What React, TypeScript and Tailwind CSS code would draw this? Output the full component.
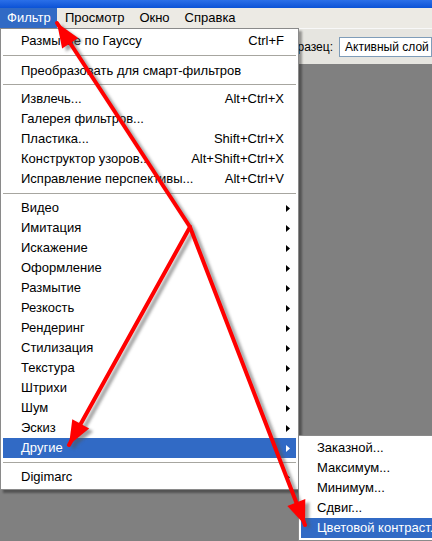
import React from 'react'

type Entry =
  | { kind: 'item'; label: string; shortcut?: string; sub?: boolean; active?: boolean }
  | { kind: 'sep'; h?: string }

const MENU: Entry[] = [
  { kind: 'item', label: 'Размытие по Гауссу', shortcut: 'Ctrl+F' },
  { kind: 'sep', h: 'h-[10px]' },
  { kind: 'item', label: 'Преобразовать для смарт-фильтров' },
  { kind: 'sep', h: 'h-[8px]' },
  { kind: 'item', label: 'Извлечь...', shortcut: 'Alt+Ctrl+X' },
  { kind: 'item', label: 'Галерея фильтров...' },
  { kind: 'item', label: 'Пластика...', shortcut: 'Shift+Ctrl+X' },
  { kind: 'item', label: 'Конструктор узоров...', shortcut: 'Alt+Shift+Ctrl+X' },
  { kind: 'item', label: 'Исправление перспективы...', shortcut: 'Alt+Ctrl+V' },
  { kind: 'sep', h: 'h-[9px]' },
  { kind: 'item', label: 'Видео', sub: true },
  { kind: 'item', label: 'Имитация', sub: true },
  { kind: 'item', label: 'Искажение', sub: true },
  { kind: 'item', label: 'Оформление', sub: true },
  { kind: 'item', label: 'Размытие', sub: true },
  { kind: 'item', label: 'Резкость', sub: true },
  { kind: 'item', label: 'Рендеринг', sub: true },
  { kind: 'item', label: 'Стилизация', sub: true },
  { kind: 'item', label: 'Текстура', sub: true },
  { kind: 'item', label: 'Штрихи', sub: true },
  { kind: 'item', label: 'Шум', sub: true },
  { kind: 'item', label: 'Эскиз', sub: true },
  { kind: 'item', label: 'Другие', sub: true, active: true },
  { kind: 'sep', h: 'h-[9px]' },
  { kind: 'item', label: 'Digimarc', sub: true },
]

const SUBMENU = ['Заказной...', 'Максимум...', 'Минимум...', 'Сдвиг...', 'Цветовой контраст...']

function Triangle({ white }: { white?: boolean }) {
  return (
    <svg width="4" height="7" viewBox="0 0 4 7" className="shrink-0">
      <path d="M0 0 L4 3.5 L0 7 Z" fill={white ? '#ffffff' : '#000000'} />
    </svg>
  )
}

function Arrows() {
  // red pointer lines drawn over the screenshot, with a soft grey drop shadow
  const lines = [
    { x1: 190, y1: 227, x2: 57, y2: 23 },
    { x1: 190, y1: 227, x2: 69, y2: 445 },
    { x1: 190, y1: 227, x2: 305, y2: 525 },
  ]
  const head = (x1: number, y1: number, x2: number, y2: number) => {
    const a = Math.atan2(y2 - y1, x2 - x1)
    const len = 26
    const w = 0.38
    const p1 = [x2 - len * Math.cos(a - w), y2 - len * Math.sin(a - w)]
    const p2 = [x2 - len * Math.cos(a + w), y2 - len * Math.sin(a + w)]
    return `${x2},${y2} ${p1[0]},${p1[1]} ${p2[0]},${p2[1]}`
  }
  return (
    <svg className="pointer-events-none absolute inset-0" width="432" height="541">
      <defs>
        <filter id="blur" x="-10%" y="-10%" width="120%" height="120%">
          <feGaussianBlur stdDeviation="1.6" />
        </filter>
      </defs>
      <g filter="url(#blur)" transform="translate(4 3)" opacity="0.55">
        {lines.map((l, i) => (
          <g key={i}>
            <line x1={l.x1} y1={l.y1} x2={l.x2} y2={l.y2} stroke="#555" strokeWidth="4" />
            <polygon points={head(l.x1, l.y1, l.x2, l.y2)} fill="#555" />
          </g>
        ))}
      </g>
      {lines.map((l, i) => (
        <g key={i}>
          <line x1={l.x1} y1={l.y1} x2={l.x2} y2={l.y2} stroke="#ff0000" strokeWidth="4" strokeLinecap="round" />
          <polygon points={head(l.x1, l.y1, l.x2, l.y2)} fill="#ff0000" />
        </g>
      ))}
    </svg>
  )
}

export default function App() {
  return (
    <div className="relative w-[432px] h-[541px] overflow-hidden bg-[#808080] text-[13px] text-black" style={{ fontFamily: '"Liberation Sans", Arial, sans-serif' }}>
      {/* title bar */}
      <div className="h-[8px] bg-gradient-to-b from-[#2a6fe8] to-[#0a52d6]" />

      {/* menu bar */}
      <div className="flex h-[20px] items-center bg-[#eceae4]">
        <div className="flex h-full w-[57px] items-center bg-[#316ac5] pl-[7px] text-white">Фильтр</div>
        <div className="ml-[8px]">Просмотр</div>
        <div className="ml-[15px]">Окно</div>
        <div className="ml-[15px]">Справка</div>
      </div>

      {/* options bar */}
      <div className="flex h-[36px] items-center justify-end gap-[6px] border-t border-[#f8f8f8] bg-[#e6e5e0] text-[12px]">
        <span>Образец:</span>
        <div className="flex h-[20px] w-[93px] items-center border border-[#7f9db9] bg-white pl-[5px] whitespace-nowrap">Активный слой</div>
      </div>

      {/* Filter dropdown */}
      <div className="absolute left-0 top-[28px] w-[299px] border border-[#8a8a8a] bg-white py-[2px] shadow-[3px_3px_2px_rgba(0,0,0,0.35)]">
        {MENU.map((e, i) =>
          e.kind === 'sep' ? (
            <div key={i} className={`flex items-center px-[2px] ${e.h}`}>
              <div className="h-[2px] w-full border-t border-[#a7a6a0] border-b-white" />
            </div>
          ) : (
            <div
              key={i}
              className={`mx-[2px] flex h-[20px] items-center pl-[18px] pr-[6px] whitespace-nowrap ${e.active ? 'bg-[#316ac5] text-white' : ''}`}
            >
              <span className="flex-1">{e.label}</span>
              {e.shortcut && <span className="mr-[6px]">{e.shortcut}</span>}
              {e.sub && <Triangle white={e.active} />}
            </div>
          )
        )}
      </div>

      {/* Другие submenu */}
      <div className="absolute left-[298px] top-[435px] w-[134px] border-y border-l border-[#8a8a8a] bg-white py-[2px]">
        {SUBMENU.map((s, i) => (
          <div
            key={s}
            className={`ml-[2px] flex h-[20px] items-center overflow-hidden pl-[16px] whitespace-nowrap ${i === SUBMENU.length - 1 ? 'bg-[#316ac5] text-white' : ''}`}
          >
            {s}
          </div>
        ))}
      </div>

      <Arrows />
    </div>
  )
}
